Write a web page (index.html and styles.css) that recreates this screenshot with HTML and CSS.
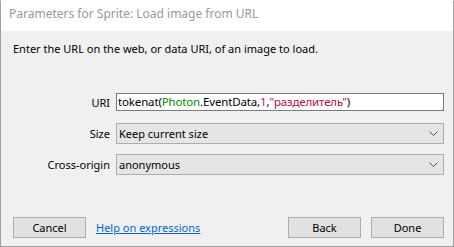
FILE: index.html
```html
<!DOCTYPE html>
<html lang="en">
<head>
    <meta charset="UTF-8">
    <title>Parameters for Sprite: Load image from URL</title>
    <link rel="stylesheet" href="styles.css">
</head>
<body>

    <div class="window">
        <div class="titlebar">Parameters for Sprite: Load image from URL</div>

        <div class="content">
            <p class="intro">Enter the URL on the web, or data URI, of an image to load.</p>

            <div class="form">
                <label class="row-label" for="uri">URI</label>
                <div class="field-input" id="uri">tokenat(<span class="obj">Photon</span>.EventData,<span class="num">1</span>,<span class="str">"разделитель"</span>)</div>

                <label class="row-label row-size">Size</label>
                <div class="field-select row-size">
                    <span>Keep current size</span>
                    <svg class="chev" width="9" height="5" viewBox="0 0 9 5"><path d="M0.5 0.5 L4.5 4.5 L8.5 0.5" fill="none" stroke="#555" stroke-width="1"/></svg>
                </div>

                <label class="row-label">Cross-origin</label>
                <div class="field-select">
                    <span>anonymous</span>
                    <svg class="chev" width="9" height="5" viewBox="0 0 9 5"><path d="M0.5 0.5 L4.5 4.5 L8.5 0.5" fill="none" stroke="#555" stroke-width="1"/></svg>
                </div>
            </div>

            <div class="footer">
                <button class="btn">Cancel</button>
                <a class="help" href="#">Help on expressions</a>
                <span class="spacer"></span>
                <button class="btn">Back</button>
                <button class="btn">Done</button>
            </div>
        </div>
    </div>

</body>
</html>
```

FILE: styles.css
```css
html, body { margin: 0; padding: 0; background: #ffffff; }
body { font-family: "Noto Sans", "Open Sans", sans-serif; font-size: 11px; color: #000; }

.window { width: 454px; height: 247px; box-sizing: border-box; border: 1px solid #a0a0a0; border-top-color: #ffffff; display: flex; flex-direction: column; }
.titlebar { height: 30px; background: #fff; color: #999; padding-left: 8px; line-height: 26px; font-size: 12px; }

.content { flex: 1; background: #f0f0f0; padding: 10px 9px 8px 12px; display: flex; flex-direction: column; }
.intro { margin: 0; line-height: 16px; }

.form { display: grid; grid-template-columns: 97px 1fr; column-gap: 6px; margin-top: 36px; align-items: center; }
.row-label { text-align: right; }
.field-input { height: 18px; box-sizing: border-box; background: #fff; border: 1px solid #7a7a7a; font-size: 11.5px; letter-spacing: -0.15px; line-height: 16px; padding-left: 1px; white-space: nowrap; }
.field-input .obj { color: #008a00; }
.field-input .num { color: #9a1b9a; }
.field-input .str { color: #b0103a; }
.field-select { height: 21px; box-sizing: border-box; background: #e5e5e5; border: 1px solid #adadad; display: flex; align-items: center; justify-content: space-between; padding: 0 5px 0 2px; }
.row-size { margin: 12px 0 10px; }

.footer { margin-top: auto; display: flex; align-items: center; gap: 10px; }
.btn { width: 73px; height: 21px; box-sizing: border-box; background: #e1e1e1; border: 1px solid #adadad; font-family: inherit; font-size: 11px; padding: 0; color: #000; }
.help { color: #0066cc; text-decoration: underline; }
.spacer { flex: 1; }
```
